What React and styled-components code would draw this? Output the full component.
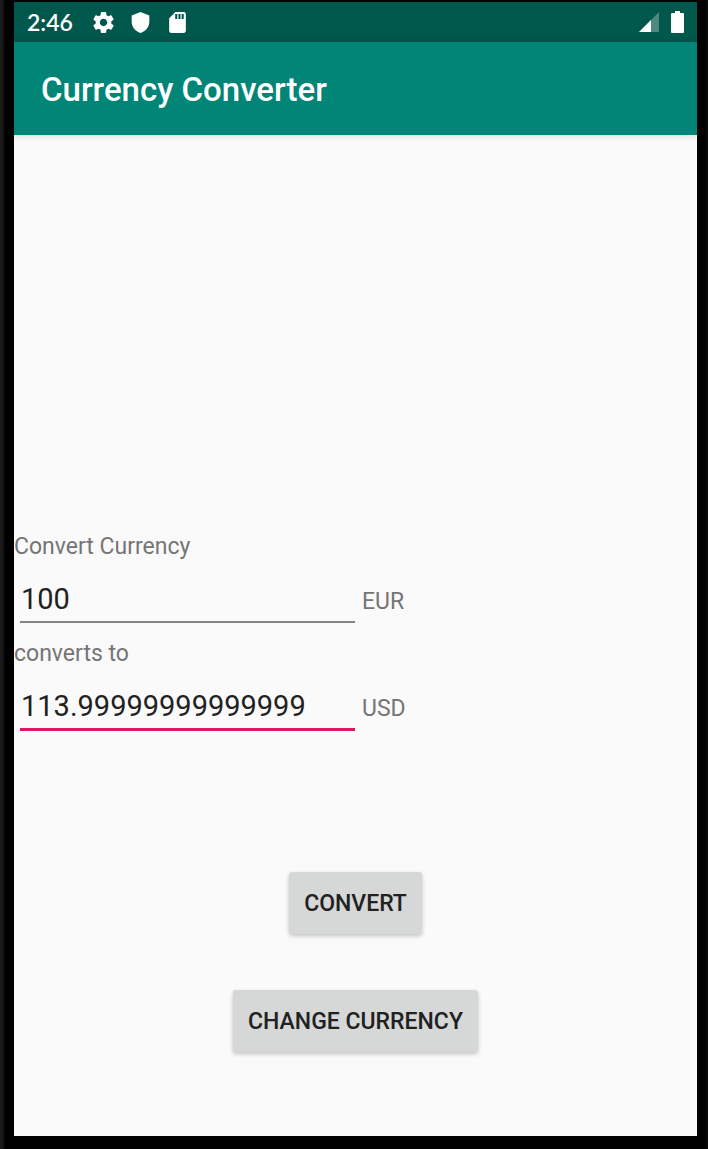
import React, { useState } from "react";
import styled, { createGlobalStyle } from "styled-components";

const GlobalStyle = createGlobalStyle`
  *, *::before, *::after { box-sizing: border-box; }
  body {
    margin: 0;
    background: #000;
    font-family: Roboto, "Liberation Sans", sans-serif;
  }
`;

const Device = styled.div`
  display: flex;
  min-height: 100vh;
  padding: 2px 11px 13px 14px;
  background: linear-gradient(to right, #1b1b1b 0, #161616 3px, #000 5px, #000 calc(100% - 4px), #0c0c0c 100%);
`;

const Screen = styled.div`
  flex: 1;
  min-width: 0;
  display: flex;
  flex-direction: column;
  background: #fafafa;
`;

const StatusBar = styled.div`
  display: flex;
  align-items: center;
  justify-content: space-between;
  height: 40px;
  padding: 0 13px;
  background: #00574b;
  color: #fff;
`;

const StatusGroup = styled.div`
  display: flex;
  align-items: center;
  gap: ${({ $gap }) => $gap}px;
`;

const Clock = styled.time`
  margin-right: 5px;
  font: 600 23px/28px Lato, "Open Sans", sans-serif;
`;

const Icon = styled.svg`
  display: block;
  flex: none;
  fill: currentColor;
`;

const AppBar = styled.header`
  position: relative;
  display: flex;
  align-items: center;
  height: 93px;
  padding: 2px 27px 0;
  background: #008577;
  color: #fff;
  box-shadow: 0 1px 6px rgba(0, 0, 0, 0.14);
`;

const Title = styled.h1`
  margin: 0;
  font-size: 33px;
  line-height: 40px;
  font-weight: 500;
`;

const Content = styled.main`
  flex: 1;
  display: flex;
  flex-direction: column;
  padding: 398px 0 84px;
`;

const Field = styled.div`
  height: 107px;
`;

const Label = styled.label`
  display: block;
  color: #757575;
  font-size: 23px;
  line-height: 28px;
`;

const FieldRow = styled.div`
  display: flex;
  align-items: flex-start;
  gap: 7px;
  padding: 20px 6px 0;
`;

const AmountInput = styled.input`
  width: 335px;
  min-width: 0;
  padding: 0 1px 4px;
  border: 0;
  border-bottom: ${({ $active }) => ($active ? "3px solid #d81b60" : "2px solid #858585")};
  border-radius: 0;
  outline: none;
  background: transparent;
  color: #212121;
  font-family: inherit;
  font-size: 29px;
  line-height: 36px;
  height: ${({ $active }) => ($active ? 43 : 42)}px;
`;

const Unit = styled.span`
  padding-top: 7px;
  color: #757575;
  font-size: 23px;
  line-height: 28px;
`;

const Actions = styled.div`
  display: flex;
  flex-direction: column;
  align-items: center;
  gap: 56px;
  margin-top: auto;
`;

const ActionButton = styled.button`
  height: 62px;
  padding: 2px 15px 0;
  border: 0;
  border-radius: 3px;
  background: #d6d7d7;
  color: #212121;
  font-family: inherit;
  font-size: 23px;
  line-height: 28px;
  font-weight: 500;
  text-transform: uppercase;
  box-shadow: 0 2px 4px rgba(0, 0, 0, 0.22);
`;

const GearIcon = () => (
  <Icon width="25" height="25" viewBox="0 0 24 24" aria-hidden="true">
    <path d="M19.43 12.98c.04-.32.07-.64.07-.98s-.03-.66-.07-.98l2.11-1.65c.19-.15.24-.42.12-.64l-2-3.46c-.12-.22-.39-.3-.61-.22l-2.49 1c-.52-.4-1.08-.73-1.69-.98l-.38-2.65A.49.49 0 0 0 14 2h-4c-.25 0-.46.18-.49.42l-.38 2.65c-.61.25-1.17.59-1.69.98l-2.49-1c-.23-.09-.49 0-.61.22l-2 3.46c-.13.22-.07.49.12.64l2.11 1.65c-.04.32-.07.65-.07.98s.03.66.07.98l-2.11 1.65c-.19.15-.24.42-.12.64l2 3.46c.12.22.39.3.61.22l2.49-1c.52.4 1.08.73 1.69.98l.38 2.65c.03.24.24.42.49.42h4c.25 0 .46-.18.49-.42l.38-2.65c.61-.25 1.17-.59 1.69-.98l2.49 1c.23.09.49 0 .61-.22l2-3.46c.12-.22.07-.49-.12-.64l-2.11-1.65zM12 15.5c-1.93 0-3.5-1.57-3.5-3.5s1.57-3.5 3.5-3.5 3.5 1.57 3.5 3.5-1.57 3.5-3.5 3.5z" />
  </Icon>
);

const ShieldIcon = () => (
  <Icon width="23" height="23" viewBox="0 0 24 24" aria-hidden="true">
    <path d="M12 1 2.8 4.6v6.6c0 5.4 3.9 10.2 9.2 11.8 5.3-1.600 9.200-6.400 9.200-11.800V4.600L12 1z" />
  </Icon>
);

const SdCardIcon = () => (
  <Icon width="25" height="25" viewBox="0 0 24 24" aria-hidden="true">
    <path d="M18 2h-8L4 8v12c0 1.100.9 2 2 2h12c1.100 0 2-.9 2-2V4c0-1.100-.9-2-2-2zm-6.200 6.600H9.800V3.800h2v4.800zm3.100 0h-2V3.800h2v4.800zm3.100 0h-2V3.800h2v4.800z" />
  </Icon>
);

const SignalIcon = () => (
  <Icon width="20" height="20" viewBox="0 0 20 20" aria-hidden="true">
    <path fillOpacity=".3" d="M20 0v20H0z" />
    <path d="M12 8v12H0z" />
  </Icon>
);

const BatteryIcon = () => (
  <Icon width="13" height="22" viewBox="0 0 13 22" aria-hidden="true">
    <path d="M4 0h5v2h3a1 1 0 0 1 1 1v18a1 1 0 0 1-1 1H1a1 1 0 0 1-1-1V3a1 1 0 0 1 1-1h3z" />
  </Icon>
);

function AmountField({ id, label, unit, value, onChange, active }) {
  return (
    <Field>
      <Label htmlFor={id}>{label}</Label>
      <FieldRow>
        <AmountInput
          id={id}
          type="text"
          inputMode="decimal"
          value={value}
          onChange={(event) => onChange(event.target.value)}
          $active={active}
        />
        <Unit>{unit}</Unit>
      </FieldRow>
    </Field>
  );
}

export default function App() {
  const [amount, setAmount] = useState("100");
  const [result, setResult] = useState("113.99999999999999");

  return (
    <>
      <GlobalStyle />
      <Device>
        <Screen>
          <StatusBar>
            <StatusGroup $gap={13}>
              <Clock>2:46</Clock>
              <GearIcon />
              <ShieldIcon />
              <SdCardIcon />
            </StatusGroup>
            <StatusGroup $gap={12}>
              <SignalIcon />
              <BatteryIcon />
            </StatusGroup>
          </StatusBar>
          <AppBar>
            <Title>Currency Converter</Title>
          </AppBar>
          <Content>
            <AmountField id="amount" label="Convert Currency" unit="EUR" value={amount} onChange={setAmount} />
            <AmountField id="result" label="converts to" unit="USD" value={result} onChange={setResult} active />
            <Actions>
              <ActionButton type="button">Convert</ActionButton>
              <ActionButton type="button">Change Currency</ActionButton>
            </Actions>
          </Content>
        </Screen>
      </Device>
    </>
  );
}
